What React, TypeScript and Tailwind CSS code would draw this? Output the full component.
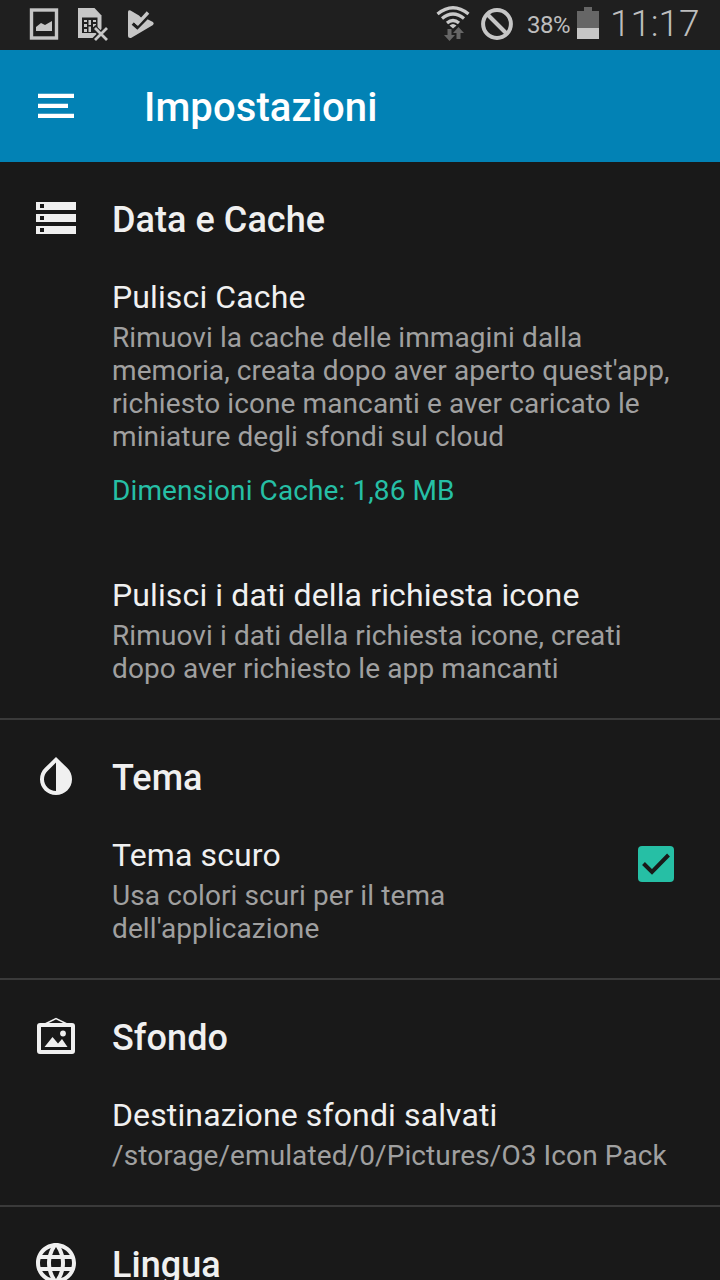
import type { ReactNode } from "react";
import { MdInvertColors, MdLanguage, MdStorage } from "react-icons/md";

function StatusBar() {
  return (
    <div className="flex h-[50px] shrink-0 items-start bg-[#1f1f1f] text-[#bdbdbd]">
      <svg className="ml-[29px] mt-2 h-8 w-[30px] shrink-0" viewBox="0 0 30 32">
        <rect x="2.500" y="2" width="25" height="28" fill="none" stroke="#c6c6c6" strokeWidth="3.400" />
        <path d="M7 23v-4l5-4 4 2 7-4v10z" fill="#c6c6c6" />
      </svg>
      <svg className="ml-[18px] mt-2 h-[34px] w-8 shrink-0" viewBox="0 0 32 34">
        <path d="M1 0H17.500l7 7.500V30H1z" fill="#c6c6c6" />
        <path d="M5 9.500h15.500V25H5z" fill="#1f1f1f" />
        <path d="M7 12h3v2H7zM11.500 12h2.500v5h-2.500zM16 12h3v2h-3zM7 16h3v3H7zM16 16h3v3h-3zM11.500 18.500h2.500V24h-2.500zM7 21h3v3H7z" fill="#c6c6c6" />
        <path d="M16.500 19L30.500 33M30.500 19L16.500 33" stroke="#1f1f1f" strokeWidth="5.500" />
        <path d="M18 20L30 32M30 20L18 32" stroke="#c6c6c6" strokeWidth="2.800" />
      </svg>
      <svg className="ml-[18px] mt-2 h-8 w-8 shrink-0" viewBox="0 0 32 32">
        <path d="M3.500 2.500L12 7.500l3 3 5 .5 6 3q1.500 1.500 0 3L4 30q-3 .5-3-2V4q0-2.500 2.500-1.500z" fill="#c6c6c6" />
        <path d="M5.800 15.500L10.300 19.500L19.500 10" fill="none" stroke="#1f1f1f" strokeWidth="3.400" />
        <path d="M7.800 12.800L10.800 15.600L21 4.500" fill="none" stroke="#c6c6c6" strokeWidth="3.400" />
      </svg>
      <svg className="ml-[276px] mt-1 h-[38px] w-9 shrink-0" viewBox="0 0 36 38">
        <g fill="none" stroke="#c9c9c9" strokeWidth="3.300">
          <path d="M2.500 10Q18-2.500 33.500 10" />
          <path d="M7 14.500Q18 5.500 29 14.500" />
          <path d="M12 19Q18 14 24 19" />
        </g>
        <path d="M14.500 21.500q3.500-3 7 0L18 24.500z" fill="#c9c9c9" />
        <path d="M12.500 25h4v6h3.500l-5.500 6-5.500-6h3.500z" fill="#666" />
        <path d="M21.500 35v-6H18l5.500-6 5.500 6h-3.500v6z" fill="#666" />
      </svg>
      <svg className="ml-2.5 mt-2 size-8 shrink-0" viewBox="0 0 32 32">
        <circle cx="16" cy="16" r="13.900" fill="none" stroke="#c6c6c6" strokeWidth="4" />
        <path d="M6.500 6.500l19 19" stroke="#c6c6c6" strokeWidth="4" />
      </svg>
      <span className="ml-3.5 mt-[10px] w-[44px] whitespace-nowrap text-2xl leading-[30px] tracking-[-0.5px]">38%</span>
      <svg className="ml-1.5 mt-[7px] h-8 w-[22px] shrink-0" viewBox="0 0 22 32">
        <path d="M7 0h8v4h7v28H0V4h7z" fill="#666" />
        <path d="M0 21h22v11H0z" fill="#c6c6c6" />
      </svg>
      <span className="ml-[11px] mt-0.5 whitespace-nowrap text-[37px] leading-[43px] font-[350] tracking-[-0.1px]">11:17</span>
    </div>
  );
}

function Toolbar() {
  return (
    <header className="flex h-28 shrink-0 items-center bg-[#0282b5] pl-[38px] text-white">
      <svg className="h-[26px] w-9 shrink-0" viewBox="0 0 36 26" fill="currentColor">
        <path d="M0 .8h36V5H0zM0 10.800h30V15H0zM0 20.800h36V25H0z" />
      </svg>
      <h1 className="ml-[70px] mt-0.5 text-[40px] font-medium leading-[47px] tracking-[0.1px]">Impostazioni</h1>
    </header>
  );
}

function FrameIcon() {
  return (
    <svg className="size-12" viewBox="0 0 48 48">
      <path d="M13 12L24 6.500 35 12" fill="none" stroke="#f0f0f0" strokeWidth="1.500" />
      <rect x="7" y="13" width="34" height="27" rx="1" fill="none" stroke="#f0f0f0" strokeWidth="4" />
      <path d="M12.500 35L20.500 25l5.500 6.500L30 27l5.500 8z" fill="#f0f0f0" />
      <circle cx="31" cy="21.500" r="2.900" fill="#f0f0f0" />
    </svg>
  );
}

type SectionProps = {
  icon: ReactNode;
  title: string;
  children?: ReactNode;
};

function Section({ icon, title, children }: SectionProps) {
  return (
    <section className="shrink-0 border-b-2 border-[#3a3a3a] px-8 pb-[33px] pt-8">
      <div className="flex h-12 items-center gap-8">
        {icon}
        <h2 className="mt-1 text-[36px] font-medium leading-[42px] tracking-[0.05px]">{title}</h2>
      </div>
      <div className="pl-20 pt-9">{children}</div>
    </section>
  );
}

type ItemProps = {
  title: string;
  lines: string[];
};

function Item({ title, lines }: ItemProps) {
  return (
    <div className="whitespace-nowrap">
      <h3 className="text-[32px] leading-[38px] tracking-[0.12px]">{title}</h3>
      <p className="mt-[5px] text-[28px] leading-[33px] tracking-[0.1px] text-[#a0a0a0]">
        {lines.map((line) => (
          <span key={line} className="block">
            {line}
          </span>
        ))}
      </p>
    </div>
  );
}

function App() {
  return (
    <div className="flex h-[1280px] w-[720px] flex-col overflow-hidden bg-[#191919] font-['Roboto',sans-serif] text-[#f0f0f0]">
      <StatusBar />
      <Toolbar />
      <Section icon={<MdStorage size={48} />} title="Data e Cache">
        <Item
          title="Pulisci Cache"
          lines={[
            "Rimuovi la cache delle immagini dalla",
            "memoria, creata dopo aver aperto quest'app,",
            "richiesto icone mancanti e aver caricato le",
            "miniature degli sfondi sul cloud",
          ]}
        />
        <p className="mb-[69px] mt-[21px] text-[28px] leading-[33px] tracking-[0.1px] text-[#26bfa5]">
          Dimensioni Cache: 1,86 MB
        </p>
        <Item
          title="Pulisci i dati della richiesta icone"
          lines={["Rimuovi i dati della richiesta icone, creati", "dopo aver richiesto le app mancanti"]}
        />
      </Section>
      <Section icon={<MdInvertColors size={48} className="mt-px" />} title="Tema">
        <div className="flex justify-between">
          <Item title="Tema scuro" lines={["Usa colori scuri per il tema", "dell'applicazione"]} />
          <svg className="mr-3.5 mt-2.5 size-9" viewBox="0 0 36 36">
            <rect width="36" height="36" rx="4" fill="#26bfa5" />
            <path d="M5.500 17.500L14 26 30.500 9" fill="none" stroke="#191919" strokeWidth="4" />
          </svg>
        </div>
      </Section>
      <Section icon={<FrameIcon />} title="Sfondo">
        <Item title="Destinazione sfondi salvati" lines={["/storage/emulated/0/Pictures/O3 Icon Pack"]} />
      </Section>
      <Section icon={<MdLanguage size={48} />} title="Lingua" />
    </div>
  );
}

export default App;
